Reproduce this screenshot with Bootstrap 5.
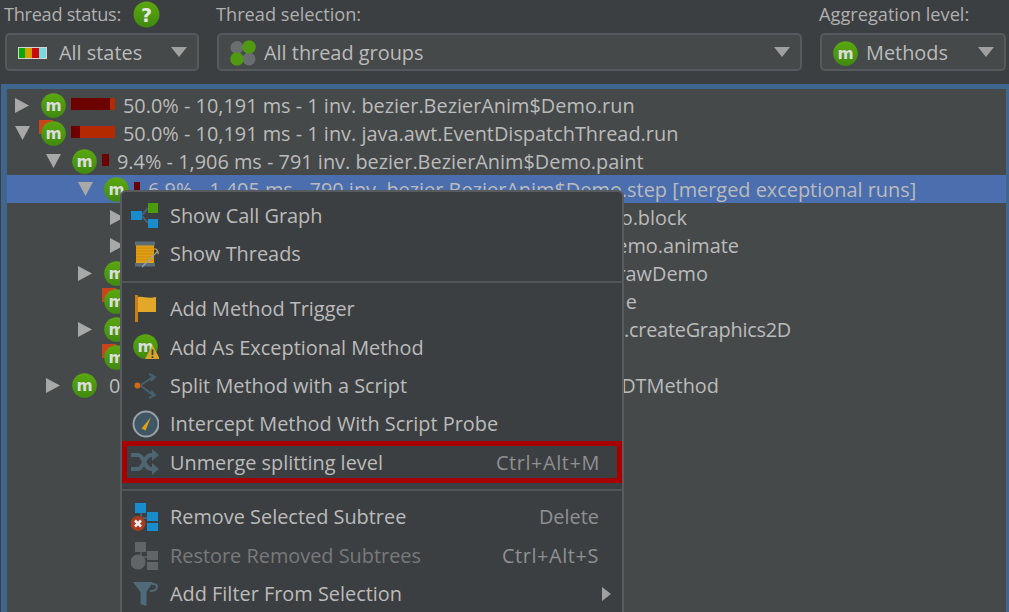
<!DOCTYPE html>
<html lang="en">
<head>
<meta charset="utf-8">
<title>Call tree</title>
<link rel="stylesheet" href="https://cdn.jsdelivr.net/npm/bootstrap@5.3.0/dist/css/bootstrap.min.css">
<style>
html,body{height:100%;margin:0;overflow:hidden;background:#3c3f41;}
body{font-family:"Open Sans","Noto Sans",sans-serif;font-size:19.9px;color:#bbb;position:relative;line-height:1.2;}
.top-bar{padding:0 2px 0 5px;gap:18px;height:84px;}
.fld-a{width:194px}.fld-b{width:585px}.fld-c{width:186px}
.fld-label{height:33px;margin-left:-1px;color:#b0b0b0;white-space:nowrap;padding-bottom:4px;font-size:18.2px;}
.tight-label{letter-spacing:-.3px;margin-right:12px;}
.combo.btn{height:38px;width:100%;background:#45494a;border:2px solid #565a5c;border-radius:5px;color:#bbb;font-size:19.9px;padding:2px 10px 0 11px;gap:8px;line-height:1;}
.combo.dropdown-toggle::after{margin-left:auto;margin-top:-2px;border-top:10px solid #a0a0a0;border-left:8px solid transparent;border-right:8px solid transparent;border-bottom:0;}
.tree-panel{border-style:solid;border-color:#3f668f;border-width:5px 3px 0 6px;margin-left:1px;background:#45494a;padding-top:2px;height:528px;}
.tree-row{height:28px;white-space:nowrap;overflow:hidden;}
.tree-row>span:not(.twist):not(.node):not(.meter){margin-top:2px;}
.tree-row.sel{background:#4b6eaf;}
.lv0{padding-left:8px}.lv1{padding-left:39px}.lv2{padding-left:71px}.lv3{padding-left:103px}
.twist{width:26px;flex:none;}
.twist svg{display:block;fill:#a8a8a8;}
.node{position:relative;width:25px;height:25px;flex:none;margin-right:5px;}
.node>svg{position:absolute;left:0;top:0;}
.flagmark{position:absolute;left:-2px;top:-1px;width:14px;height:14px;background:#c8451a;}
.warnmark{position:absolute;right:-3px;bottom:0;width:12px;height:7px;background:#c9a233;}
.meter{display:flex;height:12px;flex:none;margin-right:8px;margin-bottom:2px;}
.seg-d{background:#6c0000;height:100%}.seg-o{background:#b32a00;height:100%}
.w44{width:39px}.w5{width:5px}.w9{width:9px}.w35{width:35px}.w7{width:7px}.w6{width:6px}
.lead-txt{margin-left:7px}
.tail{margin-left:auto;}
.e687{margin-right:319px}.e739{margin-right:267px}.e708{margin-right:298px}.e637{margin-right:369px}.e791{margin-right:215px;letter-spacing:-.25px}.e719{margin-right:287px}
.ctx.dropdown-menu{left:120px;top:190px;width:504px;height:440px;margin:0;padding:4.5px 0 0;background:#3c3f41;border:2px solid #595c5e;border-radius:6px;font-size:19.9px;}
.ctx .dropdown-item{height:38.4px;padding:0 23px 0 9px;color:#bbb;gap:11px;font-size:19.9px;}
.ctx .dropdown-item:hover{background:transparent;color:#bbb}
.ctx .dropdown-item svg{flex:none;}
.ctx .item-mute{color:#787a7c}
.ctx .dropdown-item.item-mute:hover{color:#787a7c}
.keys{margin-left:auto;color:#8e9092;}
.keys-wide{letter-spacing:.6px;}
.ctx .dropdown-divider{margin:7.3px 0;border-top:2px solid #515558;opacity:1;}
.ctx .dropdown-item.marked{height:42px;margin:-2px 2px -2px 0;border:5px solid #a80000;padding:0 17px 0 4px;}
.sub-tri{margin-left:auto;margin-right:-12px;}
</style>
</head>
<body>
<svg width="0" height="0" class="d-block position-absolute">
  <defs>
    <linearGradient id="gm" x1="0" y1="0" x2="0" y2="1"><stop offset="0" stop-color="#5ba80f"/><stop offset="1" stop-color="#3f8a10"/></linearGradient>
    <symbol id="m" viewBox="0 0 25 25"><circle cx="12.5" cy="12.5" r="12.3" fill="url(#gm)"/><text x="12.5" y="17.8" text-anchor="middle" font-family="DejaVu Sans" font-weight="700" font-size="15.5" fill="#dcdcdc">m</text></symbol>
    <symbol id="tr" viewBox="0 0 14 15"><path d="M0 0L14 7.5L0 15Z"/></symbol>
    <symbol id="td" viewBox="0 0 15 14"><path d="M0 0H15L7.5 14Z"/></symbol>
  </defs>
</svg>

<div class="top-bar d-flex">
  <div class="fld-a">
    <div class="fld-label d-flex align-items-center"><span class="tight-label">Thread status:</span>
      <svg width="27" height="27" viewBox="0 0 27 27"><circle cx="13.5" cy="13.5" r="13" fill="url(#gm)"/><text x="13.5" y="20.5" text-anchor="middle" font-family="DejaVu Sans" font-weight="700" font-size="19" fill="#e8e8e8">?</text></svg>
    </div>
    <button class="combo btn dropdown-toggle d-flex align-items-center" type="button">
      <svg width="29" height="12" viewBox="0 0 29 12"><rect width="29" height="12" fill="#d4d4d4"/><rect x="1" y="1" width="6" height="10" fill="#0aa70a"/><rect x="7" y="1" width="7" height="10" fill="#cfa200"/><rect x="14" y="1" width="7" height="10" fill="#cc0a0a"/><rect x="21" y="1" width="7" height="10" fill="#78d8dc"/></svg>
      <span class="ms-1">All states</span>
    </button>
  </div>
  <div class="fld-b">
    <div class="fld-label d-flex align-items-center">Thread selection:</div>
    <button class="combo btn dropdown-toggle d-flex align-items-center" type="button">
      <svg width="26" height="26" viewBox="0 0 26 26"><circle cx="7" cy="7.5" r="6.5" fill="#6b6e70"/><circle cx="19" cy="19" r="6.5" fill="#6b6e70"/><circle cx="19" cy="7" r="6.8" fill="#4f9a12"/><circle cx="7" cy="19" r="6.8" fill="#4f9a12"/></svg>
      <span>All thread groups</span>
    </button>
  </div>
  <div class="fld-c">
    <div class="fld-label d-flex align-items-center">Aggregation level:</div>
    <button class="combo btn dropdown-toggle d-flex align-items-center" type="button">
      <svg width="25" height="25"><use href="#m"/></svg>
      <span>Methods</span>
    </button>
  </div>
</div>

<div class="tree-panel">
  <div class="tree-row lv0 d-flex align-items-center">
    <span class="twist"><svg width="14" height="15"><use href="#tr"/></svg></span>
    <span class="node"><svg width="25" height="25"><use href="#m"/></svg></span>
    <span class="meter"><i class="seg-d w44"></i><i class="seg-o w5"></i></span>
    <span>50.0% - 10,191 ms - 1 inv. bezier.BezierAnim$Demo.run</span>
  </div>
  <div class="tree-row lv0 d-flex align-items-center">
    <span class="twist"><svg width="15" height="14"><use href="#td"/></svg></span>
    <span class="node"><span class="flagmark"></span><svg width="25" height="25"><use href="#m"/></svg></span>
    <span class="meter"><i class="seg-d w9"></i><i class="seg-o w35"></i></span>
    <span>50.0% - 10,191 ms - 1 inv. java.awt.EventDispatchThread.run</span>
  </div>
  <div class="tree-row lv1 d-flex align-items-center">
    <span class="twist"><svg width="15" height="14"><use href="#td"/></svg></span>
    <span class="node"><svg width="25" height="25"><use href="#m"/></svg></span>
    <span class="meter"><i class="seg-d w7"></i></span>
    <span>9.4% - 1,906 ms - 791 inv. bezier.BezierAnim$Demo.paint</span>
  </div>
  <div class="tree-row sel lv2 d-flex align-items-center">
    <span class="twist"><svg width="15" height="14"><use href="#td"/></svg></span>
    <span class="node"><span class="warnmark"></span><svg width="25" height="25"><use href="#m"/></svg></span>
    <span class="meter"><i class="seg-d w6"></i></span>
    <span>6.9% - 1,405 ms - 790 inv. bezier.BezierAnim$Demo.step [merged exceptional runs]</span>
  </div>
  <div class="tree-row lv3 d-flex align-items-center">
    <span class="twist"><svg width="14" height="15"><use href="#tr"/></svg></span>
    <span class="tail e687">o.block</span>
  </div>
  <div class="tree-row lv3 d-flex align-items-center">
    <span class="twist"><svg width="14" height="15"><use href="#tr"/></svg></span>
    <span class="tail e739">emo.animate</span>
  </div>
  <div class="tree-row lv2 d-flex align-items-center">
    <span class="twist"><svg width="14" height="15"><use href="#tr"/></svg></span>
    <span class="node"><svg width="25" height="25"><use href="#m"/></svg></span>
    <span class="tail e708">rawDemo</span>
  </div>
  <div class="tree-row lv2 d-flex align-items-center">
    <span class="twist"></span>
    <span class="node"><span class="flagmark"></span><svg width="25" height="25"><use href="#m"/></svg></span>
    <span class="tail e637">e</span>
  </div>
  <div class="tree-row lv2 d-flex align-items-center">
    <span class="twist"><svg width="14" height="15"><use href="#tr"/></svg></span>
    <span class="node"><svg width="25" height="25"><use href="#m"/></svg></span>
    <span class="tail e791">.createGraphics2D</span>
  </div>
  <div class="tree-row lv2 d-flex align-items-center">
    <span class="twist"></span>
    <span class="node"><span class="flagmark"></span><svg width="25" height="25"><use href="#m"/></svg></span>
  </div>
  <div class="tree-row lv1 d-flex align-items-center">
    <span class="twist"><svg width="14" height="15"><use href="#tr"/></svg></span>
    <span class="node"><svg width="25" height="25"><use href="#m"/></svg></span>
    <span class="lead-txt">0</span>
    <span class="tail e719">DTMethod</span>
  </div>
</div>

<ul class="ctx dropdown-menu show list-unstyled">
  <li><a class="dropdown-item d-flex align-items-center" href="#">
    <svg width="28" height="28" viewBox="0 0 28 28"><path d="M11 13L17 6M11 14L17 21" stroke="#46606e" stroke-width="2" fill="none"/><rect x="17" y="1" width="10" height="10" fill="#4b9a10"/><rect y="9" width="11" height="9" fill="#1a8ccc"/><rect x="17" y="17" width="10" height="9" fill="#1a8ccc"/></svg>
    <span>Show Call Graph</span></a></li>
  <li><a class="dropdown-item d-flex align-items-center" href="#">
    <svg width="28" height="28" viewBox="0 0 28 28"><rect x="5" y="5" width="18" height="18" fill="#e2a015"/><path d="M5 8H23M5 11H23M5 14H23M5 17H23M5 20H23" stroke="#c98a0c" stroke-width="1"/><rect x="4" y="1.5" width="20" height="4" fill="#5b6d78"/><rect x="4" y="23" width="20" height="3.5" fill="#5b6d78"/><path d="M23 9C26 8 27 12 27.5 14" stroke="#c9a040" stroke-width="1.2" fill="none"/><path d="M11 27L27 11" stroke="#9aa0a4" stroke-width="1.2"/></svg>
    <span>Show Threads</span></a></li>
  <li><hr class="dropdown-divider"></li>
  <li><a class="dropdown-item d-flex align-items-center" href="#">
    <svg width="28" height="28" viewBox="0 0 28 28"><rect x="4" y="0" width="3" height="27" fill="#c87f17"/><path d="M7 2C12 1 17 4 25 2V17H7Z" fill="#e3a72a"/></svg>
    <span>Add Method Trigger</span></a></li>
  <li><a class="dropdown-item d-flex align-items-center" href="#">
    <svg width="28" height="28" viewBox="0 0 28 28"><use href="#m" x="2" y="1" width="25" height="25"/><path d="M21.5 12L29 26H14Z" fill="#d9a526"/><path d="M21.5 16.5V22M21.5 23.2V25" stroke="#3c3f41" stroke-width="1.8"/></svg>
    <span>Add As Exceptional Method</span></a></li>
  <li><a class="dropdown-item d-flex align-items-center" href="#">
    <svg width="28" height="28" viewBox="0 0 28 28"><path d="M10 13L22 5M10 14L22 23M18 2L24 5L20 9M18 26L24 23L20 19" stroke="#45606e" stroke-width="2" fill="none"/><circle cx="6.5" cy="13.5" r="3" fill="#d06a10"/></svg>
    <span>Split Method with a Script</span></a></li>
  <li><a class="dropdown-item d-flex align-items-center" href="#">
    <svg width="28" height="28" viewBox="0 0 28 28"><circle cx="15" cy="14" r="12.5" fill="#3f5665" stroke="#99a3a8" stroke-width="2"/><path d="M10.5 18.5L20 7L14.5 20.5Z" fill="#e0a01a"/></svg>
    <span>Intercept Method With Script Probe</span></a></li>
  <li><a class="dropdown-item marked d-flex align-items-center" href="#">
    <svg width="28" height="28" viewBox="0 0 28 28"><path d="M0 7H7C13 7 13 21 20 21H24M0 21H7C13 21 13 7 20 7H24" stroke="#4d6672" stroke-width="4" fill="none"/><path d="M21 1L28 7L21 13ZM21 15L28 21L21 27Z" fill="#4d6672"/></svg>
    <span>Unmerge splitting level</span><span class="keys keys-wide">Ctrl+Alt+M</span></a></li>
  <li><hr class="dropdown-divider"></li>
  <li><a class="dropdown-item d-flex align-items-center" href="#">
    <svg width="28" height="28" viewBox="0 0 28 28"><path d="M10 10V19M10 15H17" stroke="#46606e" stroke-width="2" fill="none"/><rect x="4" y="0" width="11" height="10" fill="#1a8ccc"/><rect x="16" y="9" width="11" height="9" fill="#1a8ccc"/><rect x="16" y="20" width="11" height="8" fill="#1a8ccc"/><circle cx="7" cy="20.5" r="7.5" fill="#a83c1e"/><path d="M4 17.5L10 23.5M10 17.5L4 23.5" stroke="#eee" stroke-width="2.6"/></svg>
    <span>Remove Selected Subtree</span><span class="keys">Delete</span></a></li>
  <li><a class="dropdown-item item-mute d-flex align-items-center" href="#">
    <svg width="28" height="28" viewBox="0 0 28 28"><path d="M10 10V19M10 15H17" stroke="#55585a" stroke-width="2" fill="none"/><rect x="4" y="0" width="11" height="10" fill="#626567"/><rect x="16" y="9" width="11" height="9" fill="#626567"/><rect x="16" y="20" width="11" height="8" fill="#626567"/><circle cx="7" cy="20" r="7.5" fill="#626567"/></svg>
    <span>Restore Removed Subtrees</span><span class="keys keys-wide">Ctrl+Alt+S</span></a></li>
  <li><a class="dropdown-item d-flex align-items-center" href="#">
    <svg width="28" height="28" viewBox="0 0 28 28"><path d="M2 2H22L15.5 12V26L9.5 24V12Z" fill="#4f6a78"/><path d="M21 4C28 3 28 11 19 11" stroke="#4f6a78" stroke-width="2" fill="none"/></svg>
    <span>Add Filter From Selection</span>
    <svg class="sub-tri" width="9" height="14" viewBox="0 0 9 14"><path d="M0 0L9 7L0 14Z" fill="#a0a0a0"/></svg></a></li>
</ul>

<script src="https://cdn.jsdelivr.net/npm/bootstrap@5.3.0/dist/js/bootstrap.bundle.min.js"></script>
</body>
</html>
